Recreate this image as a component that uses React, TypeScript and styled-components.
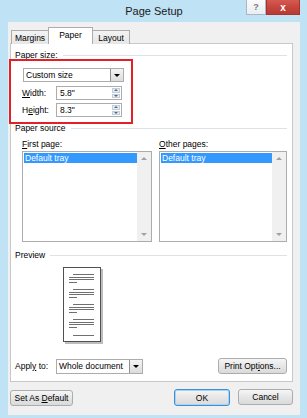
import React from "react";
import styled, { createGlobalStyle } from "styled-components";

const GlobalStyle = createGlobalStyle`
  html, body {
    margin: 0;
    padding: 0;
    background: #ffffff;
  }
  body {
    font-family: "Liberation Sans", Arial, sans-serif;
    font-size: 8.5px;
    color: #000;
  }
  * {
    box-sizing: border-box;
  }
`;

const Window = styled.div`
  width: 307px;
  height: 418px;
  background: #bfe2f4;
  display: flex;
  flex-direction: column;
  padding: 0 7px 3px 8px;
`;

const TitleBar = styled.div`
  height: 22px;
  display: grid;
  grid-template-columns: 1fr auto 1fr;
`;

const Title = styled.div`
  grid-column: 2;
  font-size: 11px;
  line-height: 22px;
  color: #1a1a1a;
`;

const Caption = styled.div`
  grid-column: 3;
  justify-self: end;
  align-self: start;
  display: flex;
  height: 15px;
`;

const CaptionBtn = styled.div<{ $close?: boolean }>`
  width: ${(p) => (p.$close ? 34 : 20)}px;
  height: 15px;
  display: flex;
  align-items: center;
  justify-content: center;
  font-weight: bold;
  font-size: ${(p) => (p.$close ? 10 : 9)}px;
  color: ${(p) => (p.$close ? "#ffffff" : "#7a7a7a")};
  background: ${(p) =>
    p.$close
      ? "linear-gradient(#d65a52, #c6463f 50%, #b83a33)"
      : "linear-gradient(#fbfbfb, #e9eef2)"};
  border: 1px solid ${(p) => (p.$close ? "#a8322c" : "#a9b8c4")};
  border-top: none;
`;

const Body = styled.div`
  flex: 1;
  background: #f0f0f0;
  padding: 5px 7px 9px 2px;
  display: flex;
  flex-direction: column;
`;

const TabRow = styled.div`
  height: 17px;
  display: flex;
  align-items: flex-end;
  padding-left: 1px;
`;

const Tab = styled.div<{ $active?: boolean; $w: number }>`
  width: ${(p) => p.$w}px;
  height: ${(p) => (p.$active ? 17 : 14)}px;
  display: flex;
  align-items: center;
  justify-content: center;
  padding-bottom: ${(p) => (p.$active ? 3 : 0)}px;
  border: 1px solid #acacac;
  border-bottom: none;
  margin-left: ${(p) => (p.$active ? -1 : 0)}px;
  margin-right: ${(p) => (p.$active ? -1 : 0)}px;
  background: ${(p) => (p.$active ? "#ffffff" : "linear-gradient(#f3f3f3, #e6e6e6)")};
  position: relative;
  z-index: ${(p) => (p.$active ? 2 : 1)};
`;

const Panel = styled.div`
  position: relative;
  margin-top: -1px;
  height: 339px;
  background: #ffffff;
  border: 1px solid #c8c8c8;
  padding: 0 5px 0 4px;
  display: flex;
  flex-direction: column;
`;

const GroupHeader = styled.div<{ $top: number }>`
  margin-top: ${(p) => p.$top}px;
  height: 12px;
  display: flex;
  align-items: center;
  gap: 5px;
  white-space: nowrap;
  &::after {
    content: "";
    flex: 1;
    height: 1px;
    background: #dde2e8;
  }
`;

const Indent = styled.div`
  padding-left: 7px;
  display: flex;
  flex-direction: column;
`;

const Combo = styled.div<{ $w: number; $h: number; $top?: number; $left?: number }>`
  width: ${(p) => p.$w}px;
  height: ${(p) => p.$h}px;
  margin-top: ${(p) => p.$top ?? 0}px;
  margin-left: ${(p) => p.$left ?? 0}px;
  border: 1px solid #acacac;
  background: #ffffff;
  display: flex;
  align-items: center;
  padding-left: 2px;
`;

const ComboText = styled.span`
  flex: 1;
`;

const DropBtn = styled.div`
  width: 13px;
  align-self: stretch;
  border-left: 1px solid #8f8f8f;
  background: linear-gradient(#f4f4f4, #dcdcdc);
  display: flex;
  align-items: center;
  justify-content: center;
  &::after {
    content: "";
    border-left: 3px solid transparent;
    border-right: 3px solid transparent;
    border-top: 3px solid #000;
  }
`;

const FieldRow = styled.div<{ $top: number }>`
  margin-top: ${(p) => p.$top}px;
  height: 14px;
  display: flex;
  align-items: center;
`;

const FieldLabel = styled.span<{ $w: number }>`
  width: ${(p) => p.$w}px;
`;

const SpinBox = styled.div`
  width: 66px;
  height: 14px;
  border: 1px solid #acacac;
  display: flex;
  align-items: center;
  padding-left: 3px;
`;

const SpinBtns = styled.div`
  width: 8px;
  align-self: stretch;
  margin: 1px 1px 1px 0;
  display: flex;
  flex-direction: column;
  gap: 1px;
`;

const SpinBtn = styled.div<{ $down?: boolean }>`
  flex: 1;
  background: #e6edf3;
  border: 1px solid #c3ced9;
  display: flex;
  align-items: center;
  justify-content: center;
  &::after {
    content: "";
    border-left: 2px solid transparent;
    border-right: 2px solid transparent;
    ${(p) => (p.$down ? "border-top" : "border-bottom")}: 2px solid #4f6b88;
  }
`;

const Lists = styled.div`
  margin-top: 5px;
  display: grid;
  grid-template-columns: 130px 128px;
  column-gap: 7px;
`;

const ListLabel = styled.div`
  height: 10px;
  line-height: 10px;
`;

const ListBox = styled.div`
  margin-top: 2px;
  height: 91px;
  border: 1px solid #acacac;
  display: flex;
  background: #ffffff;
`;

const ListItems = styled.div`
  flex: 1;
  padding: 1px 0 0 1px;
`;

const ListItem = styled.div<{ $selected?: boolean }>`
  height: 10px;
  line-height: 10px;
  padding-left: 1px;
  background: ${(p) => (p.$selected ? "#3399ff" : "transparent")};
  color: ${(p) => (p.$selected ? "#ffffff" : "#000")};
`;

const ScrollBar = styled.div`
  width: 14px;
  background: #f0f0f0;
  display: flex;
  flex-direction: column;
  justify-content: space-between;
  align-items: center;
  padding: 5px 0;
`;

const ScrollArrow = styled.div<{ $down?: boolean }>`
  border-left: 3px solid transparent;
  border-right: 3px solid transparent;
  ${(p) => (p.$down ? "border-top" : "border-bottom")}: 3px solid #a0a0a0;
`;

const PreviewBox = styled.div`
  margin: 6px 0 0 48px;
  width: 41px;
  height: 78px;
`;

const ApplyRow = styled.div`
  margin-top: 13px;
  height: 16px;
  display: flex;
  align-items: center;
`;

const Button = styled.div<{ $w: number; $default?: boolean }>`
  width: ${(p) => p.$w}px;
  height: ${(p) => (p.$default ? 17 : 16)}px;
  display: flex;
  align-items: center;
  justify-content: center;
  white-space: pre;
  border: 1px solid ${(p) => (p.$default ? "#3c8fd0" : "#acacac")};
  border-radius: 3px;
  background: linear-gradient(#f6f6f6, #e6e6e6 50%, #dadada);
  box-shadow: ${(p) => (p.$default ? "inset 0 0 0 1px #a9d3f2" : "none")};
`;

const PushRight = styled.div`
  margin-left: auto;
  display: flex;
  gap: 8px;
`;

const Footer = styled.div`
  margin-top: 7px;
  height: 17px;
  display: flex;
  align-items: center;
`;

const Highlight = styled.div`
  position: absolute;
  left: -2px;
  top: 15px;
  width: 124px;
  height: 65px;
  border: 2px solid #e3202a;
  pointer-events: none;
`;

const PagePreview = () => {
  const groups = [7, 22, 37, 52];
  return (
    <svg width="41" height="78" viewBox="0 0 41 78">
      <rect x="2" y="2" width="38" height="75" fill="#bdbdbd" />
      <rect x="0.5" y="0.5" width="37" height="74" fill="#ffffff" stroke="#505050" />
      {groups.map((g) => (
        <g key={g} stroke="#707070" strokeWidth="1">
          <line x1="10" x2="31" y1={g + 0.5} y2={g + 0.5} />
          <line x1="6" x2="31" y1={g + 3.5} y2={g + 3.5} />
          <line x1="6" x2="31" y1={g + 5.5} y2={g + 5.5} />
          <line x1="6" x2="14" y1={g + 8.5} y2={g + 8.5} />
        </g>
      ))}
      <line x1="10" x2="31" y1="68.5" y2="68.5" stroke="#707070" />
    </svg>
  );
};

export default function App() {
  return (
    <>
      <GlobalStyle />
      <Window>
        <TitleBar>
          <Title>Page Setup</Title>
          <Caption>
            <CaptionBtn>?</CaptionBtn>
            <CaptionBtn $close>x</CaptionBtn>
          </Caption>
        </TitleBar>
        <Body>
          <TabRow>
            <Tab $w={38}>Margins</Tab>
            <Tab $w={45} $active>
              Paper
            </Tab>
            <Tab $w={38}>Layout</Tab>
          </TabRow>
          <Panel>
            <GroupHeader $top={5}>
              <span>
                Paper si<u>z</u>e:
              </span>
            </GroupHeader>
            <Indent>
              <Combo $w={101} $h={14} $top={7} $left={1}>
                <ComboText>Custom size</ComboText>
                <DropBtn />
              </Combo>
              <FieldRow $top={4}>
                <FieldLabel $w={34}>
                  <u>W</u>idth:
                </FieldLabel>
                <SpinBox>
                  <ComboText>5.8"</ComboText>
                  <SpinBtns>
                    <SpinBtn />
                    <SpinBtn $down />
                  </SpinBtns>
                </SpinBox>
              </FieldRow>
              <FieldRow $top={3}>
                <FieldLabel $w={34}>
                  H<u>e</u>ight:
                </FieldLabel>
                <SpinBox>
                  <ComboText>8.3"</ComboText>
                  <SpinBtns>
                    <SpinBtn />
                    <SpinBtn $down />
                  </SpinBtns>
                </SpinBox>
              </FieldRow>
            </Indent>
            <GroupHeader $top={5}>
              <span>Paper source</span>
            </GroupHeader>
            <Indent>
              <Lists>
                <div>
                  <ListLabel>
                    <u>F</u>irst page:
                  </ListLabel>
                  <ListBox>
                    <ListItems>
                      <ListItem $selected>Default tray</ListItem>
                    </ListItems>
                    <ScrollBar>
                      <ScrollArrow />
                      <ScrollArrow $down />
                    </ScrollBar>
                  </ListBox>
                </div>
                <div>
                  <ListLabel>
                    <u>O</u>ther pages:
                  </ListLabel>
                  <ListBox>
                    <ListItems>
                      <ListItem $selected>Default tray</ListItem>
                    </ListItems>
                    <ScrollBar>
                      <ScrollArrow />
                      <ScrollArrow $down />
                    </ScrollBar>
                  </ListBox>
                </div>
              </Lists>
            </Indent>
            <GroupHeader $top={7}>
              <span>Preview</span>
            </GroupHeader>
            <PreviewBox>
              <PagePreview />
            </PreviewBox>
            <ApplyRow>
              <FieldLabel $w={41}>
                Appl<u>y</u> to:
              </FieldLabel>
              <Combo $w={87} $h={15}>
                <ComboText>Whole document</ComboText>
                <DropBtn />
              </Combo>
              <PushRight>
                <Button $w={69}>
                  <span>
                    Print Opt<u>i</u>ons...
                  </span>
                </Button>
              </PushRight>
            </ApplyRow>
            <Highlight />
          </Panel>
          <Footer>
            <Button $w={63}>
              <span>
                Set As <u>D</u>efault
              </span>
            </Button>
            <PushRight>
              <Button $w={56} $default>
                OK
              </Button>
              <Button $w={55}>Cancel</Button>
            </PushRight>
          </Footer>
        </Body>
      </Window>
    </>
  );
}
